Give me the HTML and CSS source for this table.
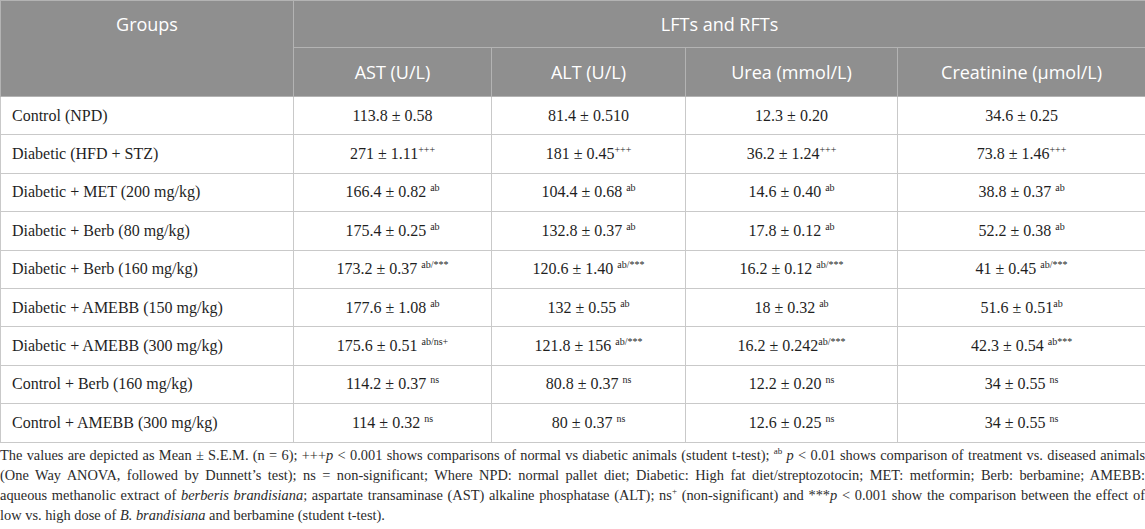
FILE: index.html
```html
<!DOCTYPE html>
<html>

	<head>
		<meta charset="UTF-8">
		<title>LFTs and RFTs</title>
		<link rel="stylesheet" href="styles.css">
	</head>

	<body>
		<table class="data">
			<colgroup>
				<col class="c-group">
				<col class="c-ast">
				<col class="c-alt">
				<col class="c-urea">
				<col class="c-crea">
			</colgroup>
			<thead>
				<tr class="head-top">
					<th rowspan="2" class="groups">Groups</th>
					<th colspan="4">LFTs and RFTs</th>
				</tr>
				<tr class="head-sub">
					<th>AST (U/L)</th>
					<th>ALT (U/L)</th>
					<th>Urea (mmol/L)</th>
					<th>Creatinine (µmol/L)</th>
				</tr>
			</thead>
			<tbody>
				<tr>
					<td>Control (NPD)</td>
					<td>113.8 ± 0.58</td>
					<td>81.4 ± 0.510</td>
					<td>12.3 ± 0.20</td>
					<td>34.6 ± 0.25</td>
				</tr>
				<tr>
					<td>Diabetic (HFD + STZ)</td>
					<td>271 ± 1.11<sup>+++</sup></td>
					<td>181 ± 0.45<sup>+++</sup></td>
					<td>36.2 ± 1.24<sup>+++</sup></td>
					<td>73.8 ± 1.46<sup>+++</sup></td>
				</tr>
				<tr>
					<td>Diabetic + MET (200 mg/kg)</td>
					<td>166.4 ± 0.82 <sup>ab</sup></td>
					<td>104.4 ± 0.68 <sup>ab</sup></td>
					<td>14.6 ± 0.40 <sup>ab</sup></td>
					<td>38.8 ± 0.37 <sup>ab</sup></td>
				</tr>
				<tr>
					<td>Diabetic + Berb (80 mg/kg)</td>
					<td>175.4 ± 0.25 <sup>ab</sup></td>
					<td>132.8 ± 0.37 <sup>ab</sup></td>
					<td>17.8 ± 0.12 <sup>ab</sup></td>
					<td>52.2 ± 0.38 <sup>ab</sup></td>
				</tr>
				<tr>
					<td>Diabetic + Berb (160 mg/kg)</td>
					<td>173.2 ± 0.37 <sup>ab/***</sup></td>
					<td>120.6 ± 1.40 <sup>ab/***</sup></td>
					<td>16.2 ± 0.12 <sup>ab/***</sup></td>
					<td>41 ± 0.45 <sup>ab/***</sup></td>
				</tr>
				<tr>
					<td>Diabetic + AMEBB (150 mg/kg)</td>
					<td>177.6 ± 1.08 <sup>ab</sup></td>
					<td>132 ± 0.55 <sup>ab</sup></td>
					<td>18 ± 0.32 <sup>ab</sup></td>
					<td>51.6 ± 0.51<sup>ab</sup></td>
				</tr>
				<tr>
					<td>Diabetic + AMEBB (300 mg/kg)</td>
					<td>175.6 ± 0.51 <sup>ab/ns+</sup></td>
					<td>121.8 ± 156 <sup>ab/***</sup></td>
					<td>16.2 ± 0.242<sup>ab/***</sup></td>
					<td>42.3 ± 0.54 <sup>ab***</sup></td>
				</tr>
				<tr>
					<td>Control + Berb (160 mg/kg)</td>
					<td>114.2 ± 0.37 <sup>ns</sup></td>
					<td>80.8 ± 0.37 <sup>ns</sup></td>
					<td>12.2 ± 0.20 <sup>ns</sup></td>
					<td>34 ± 0.55 <sup>ns</sup></td>
				</tr>
				<tr>
					<td>Control + AMEBB (300 mg/kg)</td>
					<td>114 ± 0.32 <sup>ns</sup></td>
					<td>80 ± 0.37 <sup>ns</sup></td>
					<td>12.6 ± 0.25 <sup>ns</sup></td>
					<td>34 ± 0.55 <sup>ns</sup></td>
				</tr>
			</tbody>
		</table>
		<div class="note">
			<span class="line">The values are depicted as Mean ± S.E.M. (n = 6); +++<i>p</i> &lt; 0.001 shows comparisons of normal vs diabetic animals (student t-test); <sup>ab</sup> <i>p</i> &lt; 0.01 shows comparison of treatment vs. diseased animals</span>
			<span class="line">(One Way ANOVA, followed by Dunnett’s test); ns = non-significant; Where NPD: normal pallet diet; Diabetic: High fat diet/streptozotocin; MET: metformin; Berb: berbamine; AMEBB:</span>
			<span class="line">aqueous methanolic extract of <i>berberis brandisiana</i>; aspartate transaminase (AST) alkaline phosphatase (ALT); ns<sup>+</sup> (non-significant) and ***<i>p</i> &lt; 0.001 show the comparison between the effect of</span>
			<span class="line last">low vs. high dose of <i>B. brandisiana</i> and berbamine (student t-test).</span>
		</div>
	</body>

</html>
```

FILE: styles.css
```css
* {
	padding: 0;
	margin: 0;
	box-sizing: border-box;
}

body {
	width: 1145px;
	background: #fff;
	color: #1f1f1f;
	font-family: "Liberation Serif", "Times New Roman", serif;
}

.data {
	width: 1145px;
	border-collapse: collapse;
	table-layout: fixed;
}

.c-group {
	width: 293px;
}

.c-ast {
	width: 198px;
}

.c-alt {
	width: 194px;
}

.c-urea {
	width: 212px;
}

.c-crea {
	width: 248px;
}

th {
	background: #8f8f8f;
	color: #fff;
	font-family: "Open Sans", "Noto Sans", sans-serif;
	font-weight: normal;
	font-size: 18px;
	border: 1px solid #b3b3b3;
	text-align: center;
}

.head-top th {
	height: 47px;
}

.head-sub th {
	height: 49px;
}

th.groups {
	vertical-align: top;
	padding-top: 11px;
}

td {
	border: 1px solid #c9c9c9;
	height: 38.4px;
	font-size: 16px;
	text-align: center;
	padding: 0 4px;
	white-space: nowrap;
}

td:first-child {
	text-align: left;
	padding-left: 11px;
}

sup {
	font-size: 10px;
	vertical-align: 6px;
	line-height: 0;
}

.note {
	margin-top: 2px;
	font-size: 14.4px;
	line-height: 20px;
	color: #2b2b2b;
}

.note .line {
	display: block;
	white-space: nowrap;
	text-align: justify;
	text-align-last: justify;
}

.note .line.last {
	text-align-last: left;
}

.note sup {
	font-size: 9px;
}
```
